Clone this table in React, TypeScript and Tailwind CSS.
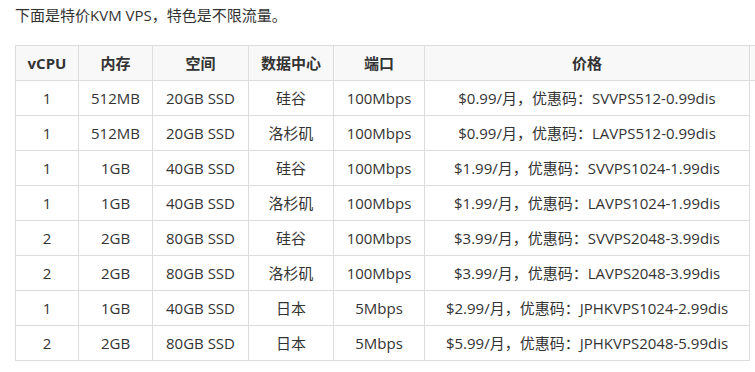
const rows = [
  ["1", "512MB", "20GB SSD", "硅谷", "100Mbps", "$0.99/月，优惠码：SVVPS512-0.99dis"],
  ["1", "512MB", "20GB SSD", "洛杉矶", "100Mbps", "$0.99/月，优惠码：LAVPS512-0.99dis"],
  ["1", "1GB", "40GB SSD", "硅谷", "100Mbps", "$1.99/月，优惠码：SVVPS1024-1.99dis"],
  ["1", "1GB", "40GB SSD", "洛杉矶", "100Mbps", "$1.99/月，优惠码：LAVPS1024-1.99dis"],
  ["2", "2GB", "80GB SSD", "硅谷", "100Mbps", "$3.99/月，优惠码：SVVPS2048-3.99dis"],
  ["2", "2GB", "80GB SSD", "洛杉矶", "100Mbps", "$3.99/月，优惠码：LAVPS2048-3.99dis"],
  ["1", "1GB", "40GB SSD", "日本", "5Mbps", "$2.99/月，优惠码：JPHKVPS1024-2.99dis"],
  ["2", "2GB", "80GB SSD", "日本", "5Mbps", "$5.99/月，优惠码：JPHKVPS2048-5.99dis"],
];

const headers = ["vCPU", "内存", "空间", "数据中心", "端口", "价格"];
const widths = ["w-[63px]", "w-[74px]", "w-[96px]", "w-[85px]", "w-[91px]", "w-[325px]", "w-[80px]"];

export default function App() {
  return (
    <div
      className="w-[755px] h-[372px] overflow-hidden bg-white text-[15px] text-[#333]"
      style={{ fontFamily: '"Open Sans", "Noto Sans CJK SC", sans-serif' }}
    >
      <p className="pl-[15px] pt-[5px] h-[45px] leading-[20px]">下面是特价KVM VPS，特色是不限流量。</p>

      <div className="pl-[15px]">
        <table className="table-fixed border-collapse w-[814px]">
          <colgroup>
            {widths.map((w, i) => (
              <col key={i} className={w} />
            ))}
          </colgroup>
          <thead>
            <tr className="bg-[#f8f8f8] h-[35px]">
              {headers.map((h) => (
                <th key={h} className="border border-[#ddd] font-bold text-center p-0">
                  {h}
                </th>
              ))}
              <th className="border-y border-l border-[#ddd] p-0"></th>
            </tr>
          </thead>
          <tbody>
            {rows.map((r, i) => (
              <tr key={i} className="h-[35px]">
                {r.map((c, j) => (
                  <td key={j} className="border border-[#ddd] text-center p-0">
                    {c}
                  </td>
                ))}
                <td className="border-l border-[#ddd] p-0"></td>
              </tr>
            ))}
          </tbody>
        </table>
      </div>
    </div>
  );
}
